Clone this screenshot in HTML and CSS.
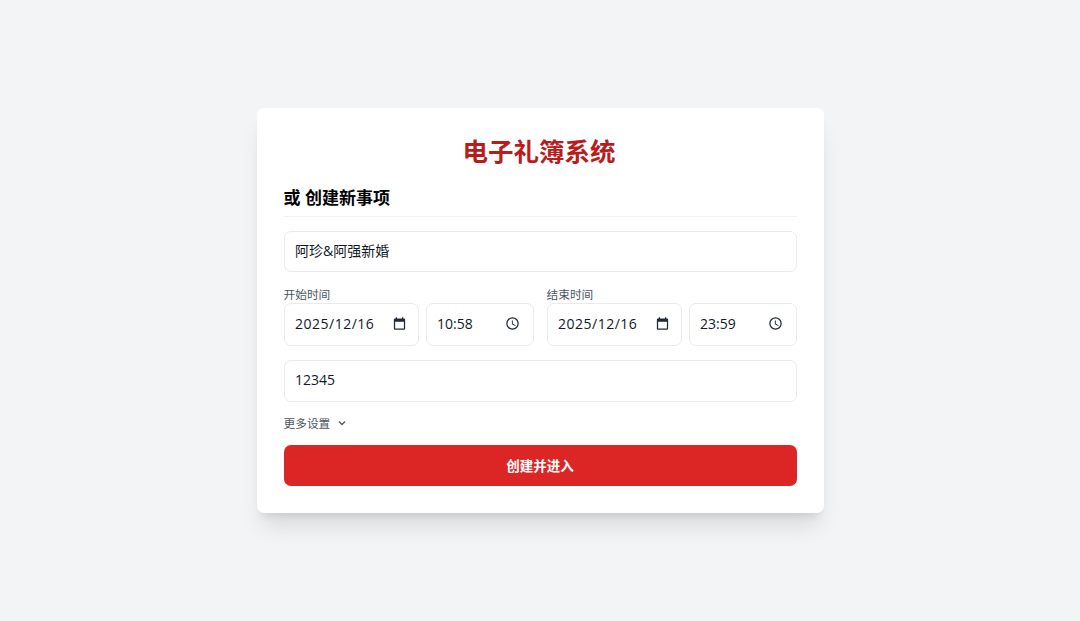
FILE: index.html
```html
<!DOCTYPE html>
<html lang="zh-CN">
<head>
    <meta charset="UTF-8">
    <meta name="viewport" content="width=device-width, initial-scale=1.0">
    <title>电子礼簿系统</title>
    <link rel="stylesheet" href="styles.css">
</head>
<body>
    <!-- Main card -->
    <div class="card">
        <h1 class="title">电子礼簿系统</h1>
        <h2 class="section-title">或 创建新事项</h2>

        <div class="field text-field">阿珍&amp;阿强新婚</div>

        <!-- Start and end time -->
        <div class="time-grid">
            <div class="time-group">
                <div class="time-label">开始时间</div>
                <div class="time-inputs">
                    <div class="field picker-field">
                        <span class="date-value">2025/12/16</span>
                        <svg class="picker-icon" viewBox="0 0 24 24"><path d="M19 4h-1V2h-2v2H8V2H6v2H5c-1.100 0-2 .9-2 2v14c0 1.100.9 2 2 2h14c1.100 0 2-.9 2-2V6c0-1.100-.9-2-2-2zm0 16H5V9h14v11z"/></svg>
                    </div>
                    <div class="field picker-field">
                        <span>10:58</span>
                        <svg class="picker-icon clock-icon" viewBox="0 0 24 24"><path d="M12 2a10 10 0 1 0 0 20 10 10 0 0 0 0-20zm0 18a8 8 0 1 1 0-16 8 8 0 0 1 0 16z"/><path d="M12.500 7H11v6l5.200 3.100.8-1.200-4.500-2.700z"/></svg>
                    </div>
                </div>
            </div>
            <div class="time-group">
                <div class="time-label">结束时间</div>
                <div class="time-inputs">
                    <div class="field picker-field">
                        <span class="date-value">2025/12/16</span>
                        <svg class="picker-icon" viewBox="0 0 24 24"><path d="M19 4h-1V2h-2v2H8V2H6v2H5c-1.100 0-2 .9-2 2v14c0 1.100.9 2 2 2h14c1.100 0 2-.9 2-2V6c0-1.100-.9-2-2-2zm0 16H5V9h14v11z"/></svg>
                    </div>
                    <div class="field picker-field">
                        <span>23:59</span>
                        <svg class="picker-icon clock-icon" viewBox="0 0 24 24"><path d="M12 2a10 10 0 1 0 0 20 10 10 0 0 0 0-20zm0 18a8 8 0 1 1 0-16 8 8 0 0 1 0 16z"/><path d="M12.500 7H11v6l5.200 3.100.8-1.200-4.500-2.700z"/></svg>
                    </div>
                </div>
            </div>
        </div>

        <div class="field text-field">12345</div>

        <div class="more-settings">
            更多设置
            <svg class="chevron" viewBox="0 0 24 24"><path d="M6 9l6 6 6-6"/></svg>
        </div>

        <button class="submit-button">创建并进入</button>
    </div>
</body>
</html>
```

FILE: styles.css
```css
body {
    margin: 0;
    height: 100vh;
    display: flex;
    align-items: center;
    justify-content: center;
    background-color: #f3f4f6;
    font-family: "Open Sans", "Noto Sans CJK SC", sans-serif;
    color: #111827;
}

/* Card */
.card {
    box-sizing: border-box;
    width: 567px;
    height: 405px;
    padding: 27px;
    background-color: #fff;
    border-radius: 7px;
    box-shadow: 0 18px 22px -5px rgba(0, 0, 0, 0.1), 0 7px 9px -5px rgba(0, 0, 0, 0.1);
}

.title {
    margin: 0 0 19px;
    padding-right: 2px;
    font-size: 25.500px;
    line-height: 32px;
    font-weight: 700;
    text-align: center;
    color: #b91c1c;
}

.section-title {
    margin: 0 0 13.500px;
    padding-bottom: 6px;
    font-size: 17px;
    line-height: 24px;
    font-weight: 700;
    color: #000;
    border-bottom: 1px solid #f0f1f3;
}

/* Inputs */
.field {
    box-sizing: border-box;
    display: flex;
    align-items: center;
    padding: 0 11px 2px 10.500px;
    font-size: 14px;
    background-color: #fff;
    border: 1px solid #e9eaed;
    border-radius: 7px;
}

.text-field {
    height: 41.500px;
}

.time-grid {
    display: grid;
    grid-template-columns: 250px 250px;
    justify-content: space-between;
    margin: 14px 0;
}

.time-label {
    height: 17px;
    font-size: 11.700px;
    line-height: 16px;
    color: #4b5563;
}

.time-inputs {
    display: grid;
    grid-template-columns: 5fr 4fr;
    gap: 7px;
}

.picker-field {
    height: 43px;
    justify-content: space-between;
}

.date-value {
    letter-spacing: 0.500px;
}

.picker-icon {
    width: 15px;
    height: 15px;
    fill: #1f2937;
}

.clock-icon {
    margin-right: 2px;
}

/* More settings toggle */
.more-settings {
    display: flex;
    align-items: center;
    gap: 6px;
    height: 16px;
    margin-top: 13px;
    font-size: 11.700px;
    color: #4b5563;
}

.chevron {
    width: 12px;
    height: 12px;
    fill: none;
    stroke: #4b5563;
    stroke-width: 2.500;
}

.submit-button {
    display: block;
    width: 100%;
    height: 40.500px;
    margin-top: 14.500px;
    border: none;
    border-radius: 7px;
    background-color: #dc2626;
    color: #fff;
    font-family: inherit;
    font-size: 13.500px;
    font-weight: 700;
}
```
